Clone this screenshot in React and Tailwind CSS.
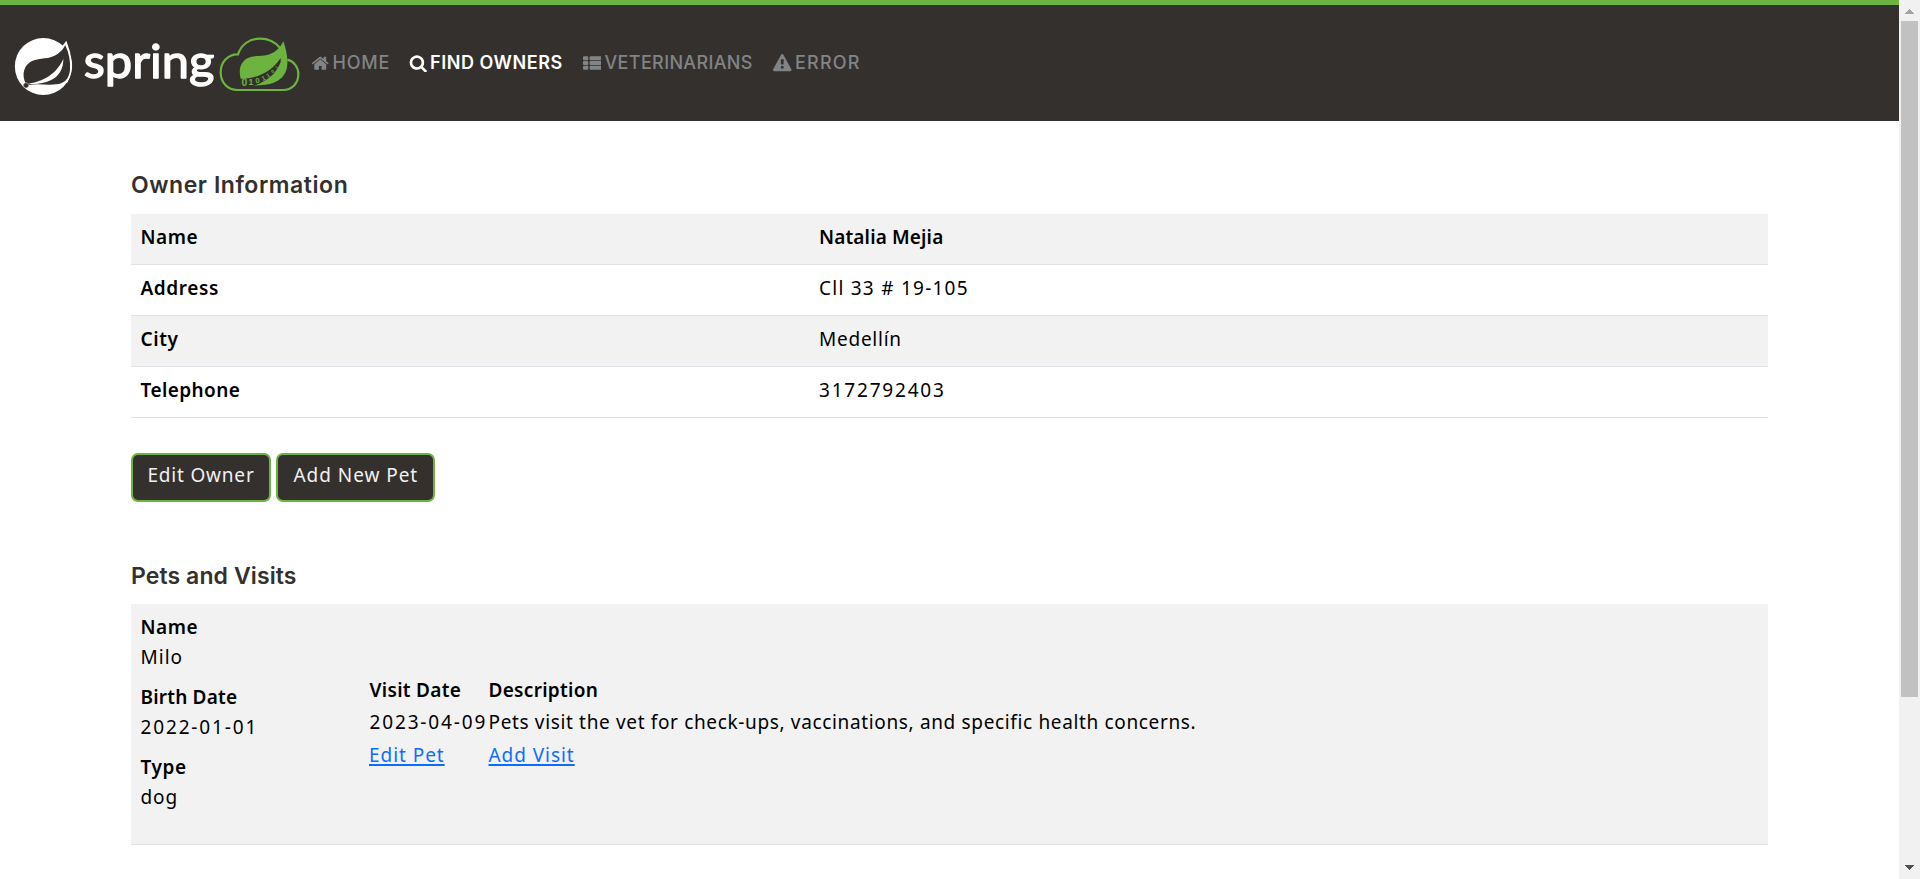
import React from "react";

function Logo() {
  return (
    <svg className="h-[75px] w-[304px] shrink-0" viewBox="0 90 912 225" aria-label="Spring">
      <g transform="translate(36 102)">
        <circle cx="94" cy="97.500" r="85.500" fill="#fff" />
        <path d="M146 42L163 20Q176 52 180 84Q183 115 166 146L130 150Z" fill="#fff" />
        <path d="M42 150C27 122 36 93 60 81C84 70 112 78 137 60Q153 48 160 34C171 58 176 82 174 107C171 134 158 149 132 151C105 154 78 148 46 153Z" fill="#34302d" />
        <path d="M48 149C92 142 133 122 154 74C155 104 140 128 116 139C94 149 70 152 48 149Z" fill="#fff" />
        <circle cx="42" cy="154" r="8" fill="#34302d" stroke="#ddd" strokeWidth="1.500" />
      </g>
      <text
        x="251"
        y="235"
        textLength="392"
        lengthAdjust="spacingAndGlyphs"
        className="font-['Lato',sans-serif] text-[142px] font-normal"
        fill="#fff"
        stroke="#fff"
        strokeWidth="4"
        strokeLinejoin="round"
      >
        spring
      </text>
      <g transform="translate(654 102)">
        <path
          d="M186 42C172 24 150 14 125 14C93 14 69 33 60 61C29 60 8 86 8 115C8 146 29 168 58 168H194C223 168 241 147 241 121C241 99 228 82 208 77"
          fill="none"
          stroke="#6db33f"
          strokeWidth="6.500"
        />
        <path d="M196 22C205 47 211 77 207 100C200 140 160 157 104 154L68 134C61 106 68 84 88 73C108 62 132 70 157 60Q181 52 196 22Z" fill="#6db33f" />
        <path d="M64 134C110 136 160 116 188 72L188 84C175 118 152 140 104 157L64 160Z" fill="#34302d" />
        <g className="font-['Liberation_Sans',sans-serif] font-bold" fill="#6db33f" textAnchor="middle">
          <text x="79" y="156" className="text-[31px]">0</text>
          <text x="99" y="153" className="text-[26px]">1</text>
          <text transform="translate(120 147) rotate(-12)" className="text-[22px]">0</text>
          <text transform="translate(139 139) rotate(-24)" className="text-[19px]">1</text>
          <text transform="translate(154 129) rotate(-36)" className="text-[17px]">1</text>
          <text transform="translate(168 116) rotate(-46)" className="text-[14px]">0</text>
          <text transform="translate(178 102) rotate(-54)" className="text-[11px]">1</text>
        </g>
      </g>
    </svg>
  );
}

const iconClass = "size-[18.5px] shrink-0 fill-current";

function HomeIcon() {
  return (
    <svg className={iconClass} viewBox="0 0 1792 1792">
      <path d="M1472 992v480q0 26-19 45t-45 19h-384v-384h-256v384h-384q-26 0-45-19t-19-45v-480q0-1 .5-3t.5-3l575-474 575 474q1 2 1 6zm223-69l-62 74q-8 9-21 11h-3q-13 0-21-7l-692-577-692 577q-12 8-24 7-13-2-21-11l-62-74q-8-10-7-23.5t11-21.5l719-599q32-26 76-26t76 26l244 204v-195q0-14 9-23t23-9h192q14 0 23 9t9 23v408l219 182q10 8 11 21.5t-7 23.5z" />
    </svg>
  );
}

function SearchIcon() {
  return (
    <svg className={iconClass} viewBox="0 0 1792 1792">
      <path d="M1216 832q0-185-131.500-316.500t-316.500-131.500-316.500 131.500-131.500 316.500 131.500 316.500 316.500 131.500 316.500-131.500 131.500-316.500zm512 832q0 52-38 90t-90 38q-54 0-90-38l-343-342q-179 124-399 124-143 0-273.500-55.500t-225-150-150-225-55.500-273.500 55.500-273.500 150-225 225-150 273.500-55.500 273.500 55.500 225 150 150 225 55.500 273.500q0 220-124 399l343 343q37 37 37 90z" />
    </svg>
  );
}

function ListIcon() {
  return (
    <svg className={iconClass} viewBox="0 0 1792 1792">
      {[220, 680, 1140].map((y) => (
        <g key={y}>
          <rect x="0" y={y} width="512" height="384" rx="96" />
          <rect x="640" y={y} width="1152" height="384" rx="96" />
        </g>
      ))}
    </svg>
  );
}

function WarningIcon() {
  return (
    <svg className={iconClass} viewBox="0 0 1792 1792">
      <path d="M1024 1375v-190q0-14-9.500-23.500t-22.500-9.500h-192q-13 0-22.500 9.500t-9.500 23.500v190q0 14 9.500 23.500t22.500 9.500h192q13 0 22.500-9.500t9.500-23.500zm-2-374l18-459q0-12-10-19-13-11-24-11h-220q-11 0-24 11-10 7-10 21l17 457q0 10 10 16.500t24 6.500h185q14 0 23.500-6.500t10.500-16.500zm-14-934l768 1408q35 63-2 126-17 29-46.500 46t-63.500 17h-1536q-34 0-63.500-17t-46.500-46q-37-63-2-126l768-1408q17-31 47-49t65-18 65 18 47 49z" />
    </svg>
  );
}

const navItems = [
  { label: "HOME", Icon: HomeIcon, box: "w-[97.5px] gap-[3px] text-[#808487]", track: "tracking-[0.8px]" },
  { label: "FIND OWNERS", Icon: SearchIcon, box: "w-[174px] gap-[3px] text-white font-semibold", track: "tracking-[0.55px]" },
  { label: "VETERINARIANS", Icon: ListIcon, box: "w-[190.5px] gap-[3.5px] text-[#808487]", track: "tracking-[0.35px]" },
  { label: "ERROR", Icon: WarningIcon, box: "gap-[3.5px] text-[#808487]", track: "tracking-[1.2px]" },
];

const ownerRows = [
  { label: "Name", value: "Natalia Mejia", lt: "tracking-[0.5px]", vt: "tracking-[0.15px] font-semibold", bg: "bg-[#f2f2f2]" },
  { label: "Address", value: "Cll 33 # 19-105", lt: "tracking-[0.6px]", vt: "tracking-[1.25px]", bg: "" },
  { label: "City", value: "Medellín", lt: "tracking-[0.6px]", vt: "tracking-[0.75px]", bg: "bg-[#f2f2f2]" },
  { label: "Telephone", value: "3172792403", lt: "tracking-[0.4px]", vt: "tracking-[1.8px]", bg: "" },
];

const petFields = [
  { label: "Name", value: "Milo", lt: "tracking-[0.5px]", vt: "tracking-[1px]" },
  { label: "Birth Date", value: "2022-01-01", lt: "tracking-[0.2px]", vt: "tracking-[1.85px]" },
  { label: "Type", value: "dog", lt: "tracking-[0.6px]", vt: "tracking-[0.9px]" },
];

function Heading({ className, children }) {
  return (
    <h2 className={`font-['Inter',sans-serif] text-[23px] leading-[26px] font-semibold text-[#34302d] ${className}`}>
      {children}
    </h2>
  );
}

function Button({ className, children }) {
  return (
    <a
      href="#"
      className={`flex h-[49px] items-start rounded-[7px] border-2 border-[#6db33f] bg-[#34302d] pt-[5px] leading-[30px] text-[#f1f1f1] ${className}`}
    >
      {children}
    </a>
  );
}

function Scrollbar() {
  return (
    <div className="flex h-full w-[21px] shrink-0 flex-col bg-[#f1f1f1] pl-[2px]">
      <svg className="h-[21px] w-[17px] shrink-0" viewBox="0 0 17 21" shapeRendering="crispEdges">
        <path d="M4 14L8.500 9L13 14Z" fill="#a3a3a3" />
      </svg>
      <div className="h-[676px] w-[17px] bg-[#c1c1c1]" />
      <svg className="mt-auto h-[21px] w-[17px] shrink-0" viewBox="0 0 17 21" shapeRendering="crispEdges">
        <path d="M4 7H13L8.500 12Z" fill="#505050" />
      </svg>
    </div>
  );
}

export default function App() {
  return (
    <div className="flex h-[879px] w-[1920px] overflow-hidden bg-white font-['Noto_Sans',sans-serif] text-[19px] text-black">
      <div className="flex min-w-0 flex-1 flex-col">
        <header className="flex h-[121px] shrink-0 items-center border-t-[5px] border-[#6db33f] bg-[#34302d]">
          <div className="flex h-[66px] items-start">
            <Logo />
          </div>
          <nav className="flex pl-[7px] font-['Inter',sans-serif] text-[18px] leading-[30px] font-medium">
            {navItems.map(({ label, Icon, box, track }) => (
              <a key={label} href="#" className={`flex items-center ${box}`}>
                <Icon />
                <span className={track}>{label}</span>
              </a>
            ))}
          </nav>
        </header>

        <main className="ml-[131px] w-[1637px]">
          <Heading className="mt-[51px] tracking-[0.55px]">Owner Information</Heading>
          <dl className="mt-4">
            {ownerRows.map((row) => (
              <div key={row.label} className={`flex h-[51px] border-b border-[#dee2e6] pt-2 pl-[9.5px] leading-[30px] ${row.bg}`}>
                <dt className={`w-[678.5px] font-semibold ${row.lt}`}>{row.label}</dt>
                <dd className={row.vt}>{row.value}</dd>
              </div>
            ))}
          </dl>

          <div className="mt-[35px] flex gap-[5px]">
            <Button className="w-[140px] pl-[14.5px] tracking-[0.8px]">Edit Owner</Button>
            <Button className="w-[159px] pl-[15.5px] tracking-[0.95px]">Add New Pet</Button>
          </div>

          <Heading className="mt-[61px] tracking-[0.1px]">Pets and Visits</Heading>
          <section className="mt-[15px] flex h-[241px] border-b border-[#dee2e6] bg-[#f2f2f2] leading-[30px]">
            <dl className="w-[237px] shrink-0 pt-2 pl-[9.5px]">
              {petFields.map((f) => (
                <div key={f.label} className="mb-[10px]">
                  <dt className={`font-semibold ${f.lt}`}>{f.label}</dt>
                  <dd className={f.vt}>{f.value}</dd>
                </div>
              ))}
            </dl>
            <div className="grid grid-cols-[120.5px_auto] content-start gap-y-[2px] pt-[71px]">
              <span className="pl-[1.5px] font-semibold tracking-[0.3px]">Visit Date</span>
              <span className="font-semibold tracking-[0.3px]">Description</span>
              <span className="pl-[1.5px] tracking-[1.85px] whitespace-nowrap">2023-04-09</span>
              <span className="tracking-[0.65px] whitespace-nowrap">
                Pets visit the vet for check-ups, vaccinations, and specific health concerns.
              </span>
              <span className="pt-px pl-[1px]">
                <a href="#" className="tracking-[0.95px] text-[#0d6efd] underline decoration-2 underline-offset-2">Edit Pet</a>
              </span>
              <span className="pt-px">
                <a href="#" className="tracking-[0.95px] text-[#0d6efd] underline decoration-2 underline-offset-2">Add Visit</a>
              </span>
            </div>
          </section>
        </main>
      </div>
      <Scrollbar />
    </div>
  );
}
